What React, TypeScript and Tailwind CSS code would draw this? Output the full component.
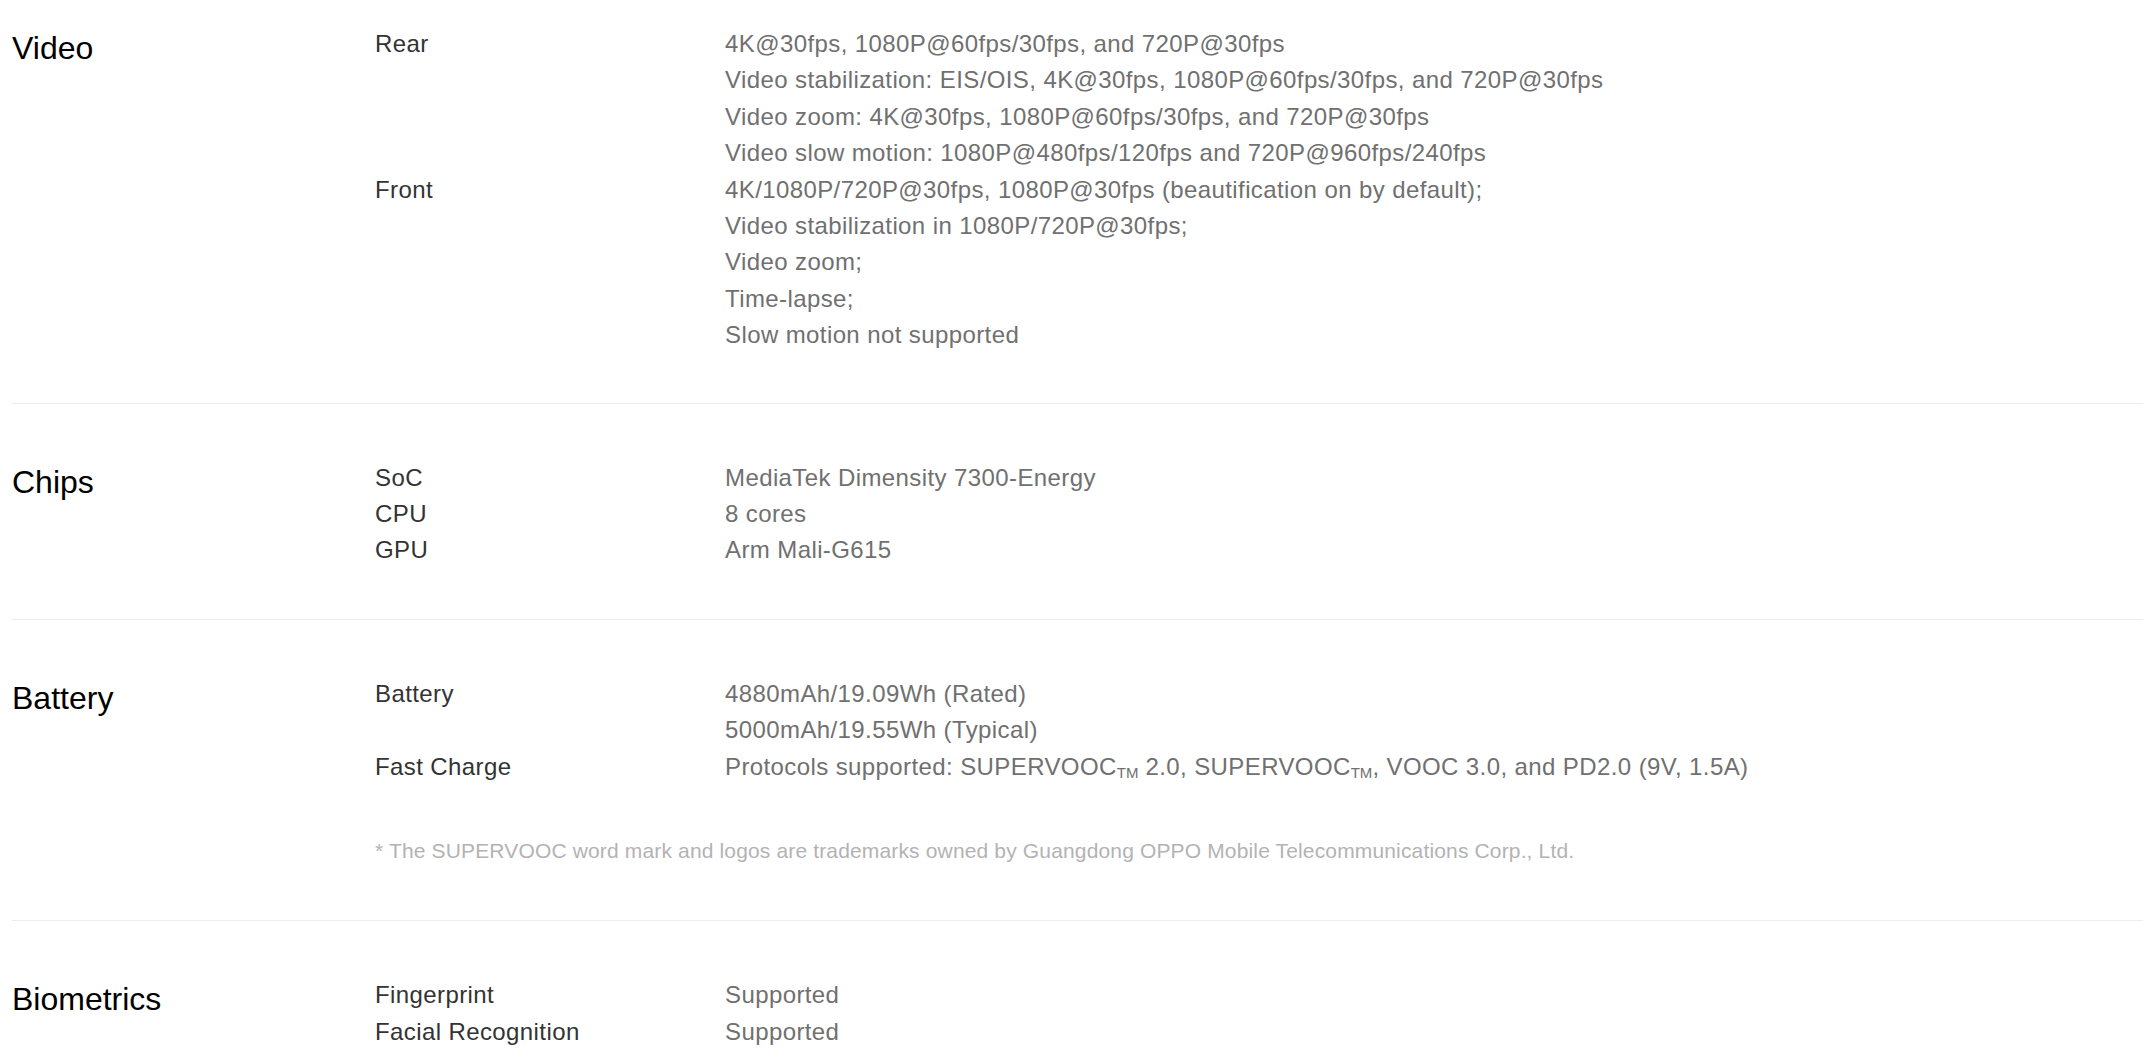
import * as React from 'react';

type Row = { label: string; values: React.ReactNode[] };
type Section = { title: string; rows: Row[]; note?: string };

const TM = () => <sub className="text-[15px] tracking-normal">TM</sub>;

const SECTIONS: Section[] = [
  {
    title: 'Video',
    rows: [
      {
        label: 'Rear',
        values: [
          '4K@30fps, 1080P@60fps/30fps, and 720P@30fps',
          'Video stabilization: EIS/OIS, 4K@30fps, 1080P@60fps/30fps, and 720P@30fps',
          'Video zoom: 4K@30fps, 1080P@60fps/30fps, and 720P@30fps',
          'Video slow motion: 1080P@480fps/120fps and 720P@960fps/240fps',
        ],
      },
      {
        label: 'Front',
        values: [
          '4K/1080P/720P@30fps, 1080P@30fps (beautification on by default);',
          'Video stabilization in 1080P/720P@30fps;',
          'Video zoom;',
          'Time-lapse;',
          'Slow motion not supported',
        ],
      },
    ],
  },
  {
    title: 'Chips',
    rows: [
      { label: 'SoC', values: ['MediaTek Dimensity 7300-Energy'] },
      { label: 'CPU', values: ['8 cores'] },
      { label: 'GPU', values: ['Arm Mali-G615'] },
    ],
  },
  {
    title: 'Battery',
    rows: [
      { label: 'Battery', values: ['4880mAh/19.09Wh (Rated)', '5000mAh/19.55Wh (Typical)'] },
      {
        label: 'Fast Charge',
        values: [
          <>
            Protocols supported: SUPERVOOC<TM /> 2.0, SUPERVOOC<TM />, VOOC 3.0, and PD2.0 (9V, 1.5A)
          </>,
        ],
      },
    ],
    note: '* The SUPERVOOC word mark and logos are trademarks owned by Guangdong OPPO Mobile Telecommunications Corp., Ltd.',
  },
  {
    title: 'Biometrics',
    rows: [
      { label: 'Fingerprint', values: ['Supported'] },
      { label: 'Facial Recognition', values: ['Supported'] },
    ],
  },
];

export default function App() {
  return (
    <div className="min-h-screen bg-white pl-3 font-['Liberation_Sans',Arial,sans-serif]">
      {SECTIONS.map((section, i) => (
        <SpecSection key={section.title} section={section} first={i === 0} last={i === SECTIONS.length - 1} />
      ))}
    </div>
  );
}

function SpecSection({ section, first, last }: { section: Section; first: boolean; last: boolean }) {
  return (
    <section
      className={
        (first ? 'pt-[26px] pb-[49px] ' : 'pt-[56px] pb-[50px] ') +
        (last ? '' : 'border-b border-[#eeeeee]') +
        ' flex'
      }
    >
      <h2 className="w-[363px] shrink-0 text-[32px] leading-[44px] text-black">{section.title}</h2>
      <div className="flex flex-col">
        {section.rows.map((row) => (
          <div key={row.label} className="flex text-[24px] leading-[36.4px] tracking-[0.4px]">
            <div className="w-[350px] shrink-0 text-[#333333]">{row.label}</div>
            <div className="flex flex-col text-[#707070]">
              {row.values.map((v, j) => (
                <div key={j}>{v}</div>
              ))}
            </div>
          </div>
        ))}
        {section.note && (
          <p className="mt-[52px] mb-[5px] text-[21px] leading-[28px] tracking-[0.15px] text-[#b3b3b3]">
            {section.note}
          </p>
        )}
      </div>
    </section>
  );
}
